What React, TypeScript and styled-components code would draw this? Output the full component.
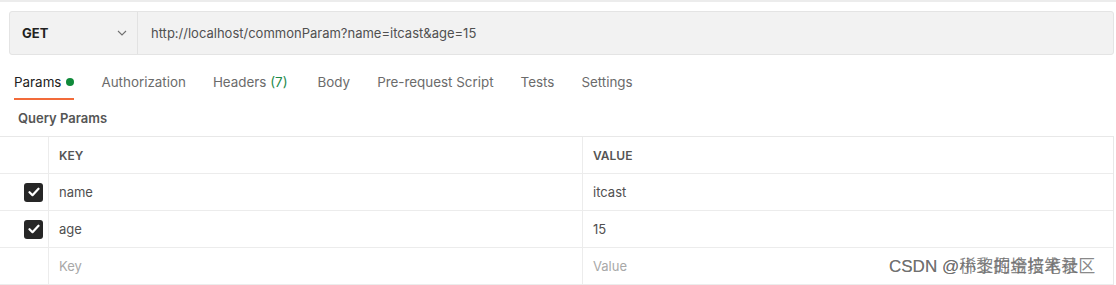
import React from "react";
import styled, { createGlobalStyle } from "styled-components";

const GlobalStyle = createGlobalStyle`
  body {
    margin: 0;
    background: #ffffff;
    font-family: Inter, "Noto Sans", "Noto Sans CJK SC", sans-serif;
  }
`;

const Page = styled.div`
  position: relative;
  width: 1116px;
  height: 285px;
  overflow: hidden;
  border-top: 2px solid #ececec;
  box-sizing: border-box;
  padding-top: 9px;
`;

const UrlBar = styled.div`
  display: flex;
  margin: 0 2px 0 9px;
  height: 44px;
  background: #f2f2f2;
  border: 1px solid #e4e4e4;
  border-radius: 3px;
  box-sizing: border-box;
`;

const Method = styled.div`
  display: flex;
  align-items: center;
  justify-content: space-between;
  width: 128px;
  padding: 0 10px 0 12px;
  box-sizing: border-box;
  border-right: 1px solid #e2e2e2;
  font-size: 13px;
  font-weight: 700;
  color: #212121;
`;

const UrlText = styled.div`
  display: flex;
  align-items: center;
  padding-left: 13px;
  font-size: 13px;
  color: #505050;
`;

const Tabs = styled.div`
  display: flex;
  gap: 27px;
  height: 34px;
  margin-top: 11px;
  padding-left: 14px;
`;

const Tab = styled.div<{ $active?: boolean }>`
  display: flex;
  align-items: center;
  gap: 5px;
  font-size: 13.4px;
  color: ${(p) => (p.$active ? "#212121" : "#6b6b6b")};
  border-bottom: 2px solid ${(p) => (p.$active ? "#f26b3a" : "transparent")};
  box-sizing: border-box;
`;

const Dot = styled.span`
  width: 8px;
  height: 8px;
  border-radius: 50%;
  background: #0f8a3a;
`;

const Count = styled.span`
  color: #1e8a4a;
  margin-right: 3px;
`;

const Section = styled.div`
  display: flex;
  align-items: center;
  padding-left: 18px;
  height: 36px;
  box-sizing: border-box;
  font-size: 13px;
  font-weight: 600;
  color: #555555;
`;

const Table = styled.div`
  margin-right: 2px;
  border-top: 1px solid #e8e8e8;
  border-right: 1px solid #e8e8e8;
`;

const Row = styled.div<{ $height: number }>`
  display: grid;
  grid-template-columns: 49px 533px 1fr;
  height: ${(p) => p.$height}px;
  border-bottom: 1px solid #ececec;
  box-sizing: border-box;
`;

const CheckCell = styled.div`
  display: flex;
  align-items: center;
  justify-content: flex-end;
  padding-right: 5px;
  border-right: 1px solid #ececec;
`;

const Cell = styled.div<{ $kind?: "head" | "placeholder" }>`
  display: flex;
  align-items: center;
  padding-left: 10px;
  font-size: ${(p) => (p.$kind === "head" ? "12px" : "13px")};
  font-weight: ${(p) => (p.$kind === "head" ? 600 : 400)};
  color: ${(p) =>
    p.$kind === "placeholder" ? "#a8a8a8" : p.$kind === "head" ? "#555555" : "#505050"};
  & + & {
    border-left: 1px solid #ececec;
  }
`;

const Box = styled.span`
  display: flex;
  align-items: center;
  justify-content: center;
  width: 19px;
  height: 19px;
  border-radius: 3px;
  background: #262626;
`;

const Watermark = styled.div`
  position: absolute;
  left: 889px;
  top: 250px;
  width: 220px;
  height: 22px;
  font-size: 17px;
  color: rgba(105, 105, 105, 0.8);
  font-family: "Liberation Sans", "Noto Sans CJK SC", sans-serif;
  white-space: nowrap;
  & > span {
    position: absolute;
    left: 0;
    top: 0;
  }
`;

const Chevron = () => (
  <svg width="10" height="6" viewBox="0 0 10 6" fill="none">
    <path d="M1 1l4 4 4-4" stroke="#707070" strokeWidth="1.1" />
  </svg>
);

const Check = () => (
  <Box>
    <svg width="12" height="10" viewBox="0 0 12 10" fill="none">
      <path d="M1.5 5.2l3 3 6-6.5" stroke="#ffffff" strokeWidth="2.2" strokeLinecap="round" strokeLinejoin="round" />
    </svg>
  </Box>
);

const params = [
  { key: "name", value: "itcast" },
  { key: "age", value: "15" },
];

const App = () => {
  return (
    <Page>
      <GlobalStyle />
      <UrlBar>
        <Method>
          GET
          <Chevron />
        </Method>
        <UrlText>http://localhost/commonParam?name=itcast&amp;age=15</UrlText>
      </UrlBar>
      <Tabs>
        <Tab $active>
          Params <Dot />
        </Tab>
        <Tab>Authorization</Tab>
        <Tab>
          <span>
            Headers <Count>(7)</Count>
          </span>
        </Tab>
        <Tab>Body</Tab>
        <Tab>Pre-request Script</Tab>
        <Tab>Tests</Tab>
        <Tab>Settings</Tab>
      </Tabs>
      <Section>Query Params</Section>
      <Table>
        <Row $height={37}>
          <CheckCell />
          <Cell $kind="head">KEY</Cell>
          <Cell $kind="head">VALUE</Cell>
        </Row>
        {params.map((p) => (
          <Row $height={37} key={p.key}>
            <CheckCell>
              <Check />
            </CheckCell>
            <Cell>{p.key}</Cell>
            <Cell>{p.value}</Cell>
          </Row>
        ))}
        <Row $height={37}>
          <CheckCell />
          <Cell $kind="placeholder">Key</Cell>
          <Cell $kind="placeholder">Value</Cell>
        </Row>
      </Table>
      <Watermark>
        <span>CSDN @稀土掘金技术社区</span>
        <span>CSDN @小黎的培培笔录</span>
      </Watermark>
    </Page>
  );
};

export default App;
